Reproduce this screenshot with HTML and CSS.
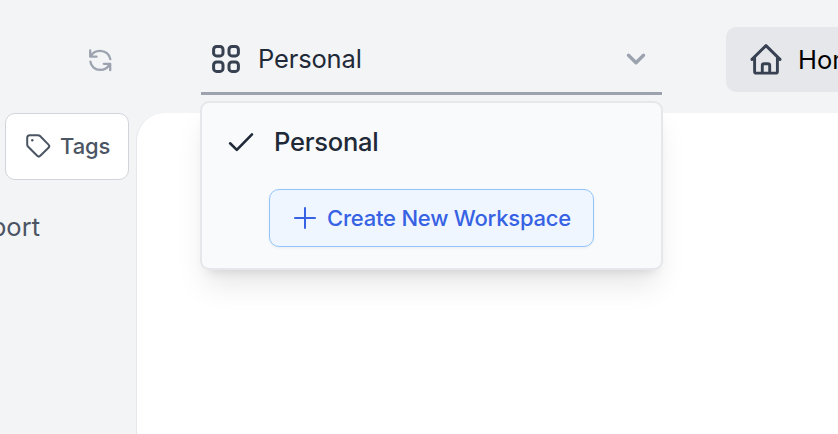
FILE: index.html
```html
<!DOCTYPE html>
<html lang="en">
<head>
<meta charset="utf-8">
<title>Workspace</title>
<link rel="stylesheet" href="styles.css">
</head>
<body>
<div class="app">
  <aside class="sidebar">
    <div class="sidebar-top">
      <svg class="refresh" width="26" height="26" viewBox="0 0 26 26"><path d="M3.2 3.4v6.3h6.4M3.6 9.4C5.4 5.9 9 3.8 13 3.8c5.4 0 9.6 3.6 10.3 8.4M3.4 14.6c.6 4.9 4.6 8.3 9.8 8.3 4.2 0 7.6-2.2 9.3-5.7M23.2 23.2v-6.4h-6.4"/></svg>
    </div>
    <button class="tags">
      <svg width="28" height="28" viewBox="0 0 28 28"><path d="M3.2 5.8a2.6 2.6 0 0 1 2.6-2.6h8.1a3.4 3.4 0 0 1 2.4 1l8.2 8.4a2.2 2.2 0 0 1 0 3.1l-8.2 8.1a2.2 2.2 0 0 1-3.1 0l-9-9a3.4 3.4 0 0 1-1-2.4z"/><circle class="dot" cx="8.3" cy="8.3" r="1.2"/></svg>
      <span>Tags</span>
    </button>
    <div class="item">Support</div>
  </aside>
  <main class="main">
    <header class="header">
      <div class="select">
        <div class="select-trigger">
          <svg class="grid" width="30" height="30" viewBox="0 0 30 30"><rect x="2.6" y="2.5" width="9.4" height="9.4" rx="3"/><rect x="18" y="2.5" width="9.4" height="9.4" rx="3"/><rect x="2.6" y="18" width="9.4" height="9.4" rx="3"/><rect x="18" y="18" width="9.4" height="9.4" rx="3"/></svg>
          <span class="select-label">Personal</span>
          <svg class="chevron" width="22" height="14" viewBox="0 0 22 14"><path d="M3.5 3.2 11 10.7l7.5-7.5"/></svg>
        </div>
        <div class="menu">
          <div class="option">
            <svg class="check" width="28" height="22" viewBox="0 0 28 22"><path d="M3.1 12.3l6.7 6.6L25 3.4"/></svg>
            <span>Personal</span>
          </div>
          <button class="create">
            <svg width="24" height="24" viewBox="0 0 24 24"><path d="M12 2v20M2 12h20"/></svg>
            <span>Create New Workspace</span>
          </button>
        </div>
      </div>
      <div class="tab">
        <svg class="home" width="34" height="34" viewBox="0 0 34 34"><path d="M3 16.4 17 2.6l14 13.8M5.6 14.6v13.8a1.7 1.7 0 0 0 1.7 1.7h19.4a1.7 1.7 0 0 0 1.7-1.7V14.6M13.3 30v-7.4a1.8 1.8 0 0 1 1.8-1.8h3.8a1.8 1.8 0 0 1 1.8 1.8V30"/></svg>
        <span>Home</span>
      </div>
    </header>
    <section class="content"></section>
  </main>
</div>
</body>
</html>
```
FILE: styles.css
```css
* { box-sizing: border-box; }
body { margin: 0; font-family: Inter, sans-serif; background: #f3f4f6; overflow: hidden; }
svg { display: block; flex: none; fill: none; stroke: currentColor; stroke-linecap: round; stroke-linejoin: round; }
button { font: inherit; margin: 0; }
.app { display: flex; width: 838px; height: 434px; overflow: hidden; }
.sidebar { width: 136px; flex: none; color: #4b5563; overflow: hidden; }
.sidebar-top { height: 113px; padding: 47px 0 0 87px; }
.refresh { color: #9ca3af; stroke-width: 2.3; }
.tags { display: flex; align-items: center; width: 124px; height: 67px; margin-left: 5px; padding: 0 0 1px 18px; gap: 8px; background: #fff; border: 1px solid #d1d5db; border-radius: 10px; color: #4b5563; font-size: 22px; font-weight: 550; letter-spacing: -0.1px; }
.tags svg { stroke-width: 2; }
.tags .dot { fill: currentColor; stroke: none; }
.item { display: flex; justify-content: flex-end; width: 40px; margin-top: 31px; font-size: 25.5px; line-height: 32px; }
.main { flex: 1; min-width: 0; display: flex; flex-direction: column; }
.header { display: flex; height: 113px; flex: none; padding-left: 65px; gap: 64px; }
.select { position: relative; width: 461px; height: 95px; flex: none; border-bottom: 3px solid #9ca3af; }
.select-trigger { display: flex; align-items: center; height: 92px; padding: 26px 15px 0 10px; color: #1f2937; font-size: 25.5px; letter-spacing: -0.15px; }
.grid { color: #374151; stroke-width: 3; }
.select-label { margin-left: 17px; flex: 1; padding-bottom: 1px; }
.chevron { color: #9ca3af; stroke-width: 3.4; }
.menu { position: absolute; top: 101px; left: -1px; width: 463px; height: 169px; padding: 21px 0 0; border: 2px solid #e5e7eb; border-radius: 9px; background: #f9fafb; box-shadow: 0 20px 30px -6px rgba(0,0,0,.1), 0 8px 12px -8px rgba(0,0,0,.14); }
.option { display: flex; align-items: center; height: 36px; padding-left: 25px; gap: 19px; color: #1f2937; font-size: 25.5px; font-weight: 500; letter-spacing: -0.25px; }
.option span { padding-bottom: 1px; }
.check { stroke-width: 2.6; }
.create { display: flex; align-items: center; width: 325px; height: 58px; margin: 29px 0 0 67px; padding: 0 0 0 23px; gap: 10px; background: #eff6ff; border: 1px solid #93c5fd; border-radius: 10px; box-shadow: 0 1px 3px rgba(0,0,0,.06); color: #3662e3; font-size: 22px; font-weight: 550; letter-spacing: -0.22px; white-space: nowrap; }
.create svg { stroke-width: 2; }
.tab { display: flex; align-items: center; width: 180px; height: 65px; flex: none; margin-top: 27px; padding-left: 23px; gap: 15px; border-radius: 10px; background: #e5e7eb; color: #000; font-size: 25.5px; }
.tab span { padding-bottom: 1px; }
.home { color: #374151; stroke-width: 2.9; }
.content { flex: 1; border-left: 1px solid #e5e7eb; border-top-left-radius: 28px; background: #fff; }
```
